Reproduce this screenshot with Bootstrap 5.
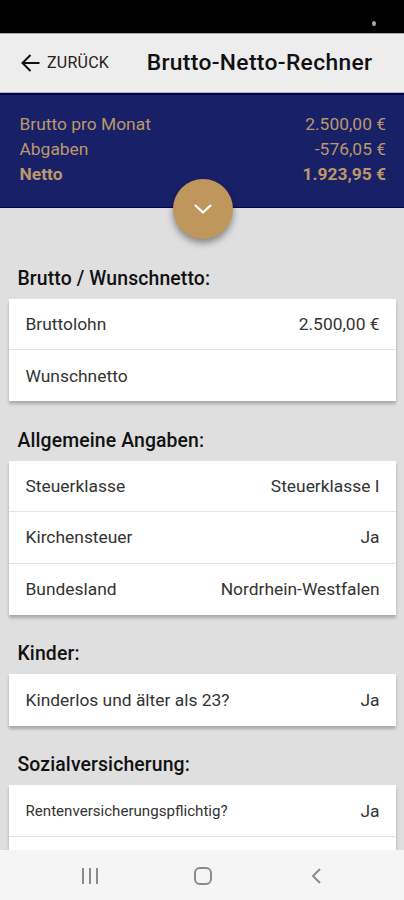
<!DOCTYPE html>
<html lang="de">
<head>
<meta charset="utf-8">
<meta name="viewport" content="width=device-width, initial-scale=1">
<title>Brutto-Netto-Rechner</title>
<link href="https://cdn.jsdelivr.net/npm/bootstrap@5.3.0/dist/css/bootstrap.min.css" rel="stylesheet">
<style>
  body { font-family: Roboto, "Liberation Sans", sans-serif; background: #dfdfdf; color: #111; }
  .screen { height: 900px; }
  .status { height: 33px; background: #000; padding: 14px 28px 0 0; }
  .status-dot { width: 4px; height: 5px; background: #aaa; }
  .topbar { height: 60px; background: #ededed; padding: 0 21px; border-top: 1px solid #aaa; border-bottom: 1px solid #b5b5c6; }
  .back-label { font-size: 16px; letter-spacing: .25px; margin-left: 7px; color: #222; }
  .page-title { font-size: 22.8px; font-weight: 500; letter-spacing: .35px; margin-left: 37.5px; line-height: 28px; }
  .summary { height: 115px; background: #182068; color: #bd9769; padding: 17px 18px 0 19.5px; font-size: 17.4px; line-height: 25.2px; border-top: 2px solid #020249; border-bottom: 1px solid #05054f; }
  .summary strong { font-weight: 700; }
  .toggle { width: 60px; height: 60px; background: #bf975c; top: 178.5px; left: 172.5px; box-shadow: 0 4px 7px rgba(0,0,0,.4); }
  .content-area { padding: 31px 8px 0 9px; }
  .group-title { font-size: 19.4px; font-weight: 500; line-height: 24px; height: 59.5px; padding: 27.5px 0 0 8.5px; margin: 0; letter-spacing: .12px; }
  .fields { box-shadow: 0 3px 3px rgba(0,0,0,.24); --bs-list-group-border-color: #e3e3e3; }
  .fields .list-group-item { height: 51.4px; padding: 0 16.5px; font-size: 17.4px; line-height: 26px; color: #333; border-width: 0 0 1px; }
  .fields .list-group-item:last-child { border-bottom: 0; }
  .fields .compact { font-size: 15.1px; }
  .sysbar { height: 50px; background: #f5f5f5; z-index: 1; }
</style>
<script src="https://cdn.jsdelivr.net/npm/bootstrap@5.3.0/dist/js/bootstrap.bundle.min.js"></script>
</head>
<body>
<div class="screen d-flex flex-column overflow-hidden position-relative">
  <div class="status d-flex flex-shrink-0 justify-content-end align-items-center"><span class="status-dot rounded-circle"></span></div>
  <header class="topbar d-flex flex-shrink-0 align-items-center">
    <svg width="19" height="18" viewBox="0 0 19 18" fill="none" stroke="#111" stroke-width="2"><path d="M18.5 9H1.5M9.5 1L1.5 9l8 8"/></svg>
    <span class="back-label">ZURÜCK</span>
    <h1 class="page-title mb-0 text-nowrap">Brutto-Netto-Rechner</h1>
  </header>
  <section class="summary flex-shrink-0">
    <div class="d-flex justify-content-between"><span>Brutto pro Monat</span><span>2.500,00 €</span></div>
    <div class="d-flex justify-content-between"><span>Abgaben</span><span>-576,05 €</span></div>
    <div class="d-flex justify-content-between"><strong>Netto</strong><strong>1.923,95 €</strong></div>
  </section>
  <button class="toggle btn p-0 border-0 rounded-circle position-absolute d-flex align-items-center justify-content-center" aria-label="Details">
    <svg width="20" height="12" viewBox="0 0 20 12" fill="none" stroke="#fff" stroke-width="2.2"><path d="M2 2l8 7.6L18 2"/></svg>
  </button>
  <main class="content-area flex-grow-1 overflow-hidden">
    <h2 class="group-title">Brutto / Wunschnetto:</h2>
    <ul class="fields list-group rounded-0">
      <li class="list-group-item d-flex justify-content-between align-items-center"><span>Bruttolohn</span><span>2.500,00 €</span></li>
      <li class="list-group-item d-flex justify-content-between align-items-center"><span>Wunschnetto</span></li>
    </ul>
    <h2 class="group-title">Allgemeine Angaben:</h2>
    <ul class="fields list-group rounded-0">
      <li class="list-group-item d-flex justify-content-between align-items-center"><span>Steuerklasse</span><span>Steuerklasse I</span></li>
      <li class="list-group-item d-flex justify-content-between align-items-center"><span>Kirchensteuer</span><span>Ja</span></li>
      <li class="list-group-item d-flex justify-content-between align-items-center"><span>Bundesland</span><span>Nordrhein-Westfalen</span></li>
    </ul>
    <h2 class="group-title">Kinder:</h2>
    <ul class="fields list-group rounded-0">
      <li class="list-group-item d-flex justify-content-between align-items-center"><span>Kinderlos und älter als 23?</span><span>Ja</span></li>
    </ul>
    <h2 class="group-title">Sozialversicherung:</h2>
    <ul class="fields list-group rounded-0">
      <li class="list-group-item d-flex justify-content-between align-items-center"><span class="compact">Rentenversicherungspflichtig?</span><span>Ja</span></li>
      <li class="list-group-item"></li>
    </ul>
  </main>
  <nav class="sysbar d-flex flex-shrink-0 align-items-center">
    <svg width="404" height="50" viewBox="0 0 404 50" fill="none" stroke="#8b8b8b" stroke-width="2">
      <path d="M83 18v16M90 18v16M97 18v16M320 19l-7 7 7 7"/>
      <rect x="195" y="18" width="16" height="16" rx="5"/>
    </svg>
  </nav>
</div>
</body>
</html>
